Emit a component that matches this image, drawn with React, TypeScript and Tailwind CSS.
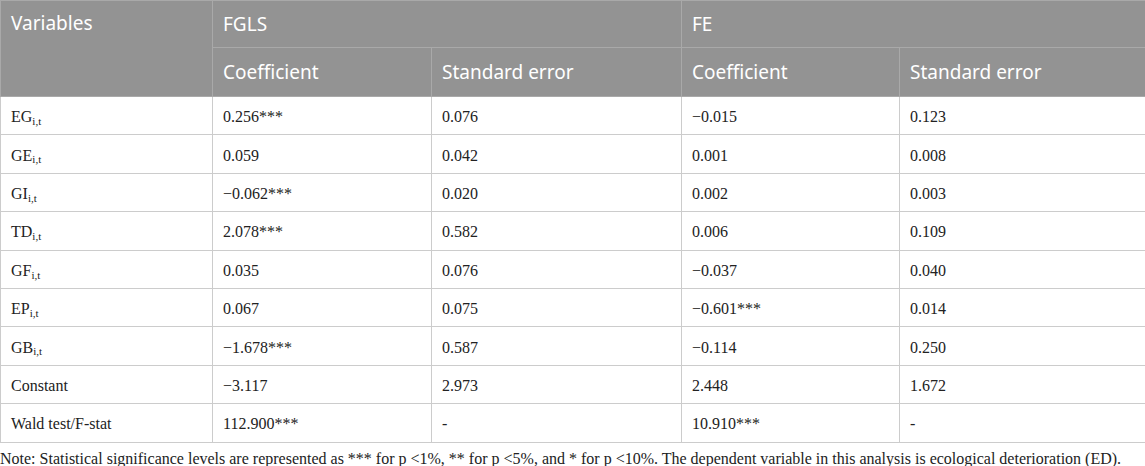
const rows: { name: string; sub?: string; v: string[] }[] = [
  { name: "EG", sub: "i,t", v: ["0.256***", "0.076", "\u22120.015", "0.123"] },
  { name: "GE", sub: "i,t", v: ["0.059", "0.042", "0.001", "0.008"] },
  { name: "GI", sub: "i,t", v: ["\u22120.062***", "0.020", "0.002", "0.003"] },
  { name: "TD", sub: "i,t", v: ["2.078***", "0.582", "0.006", "0.109"] },
  { name: "GF", sub: "i,t", v: ["0.035", "0.076", "\u22120.037", "0.040"] },
  { name: "EP", sub: "i,t", v: ["0.067", "0.075", "\u22120.601***", "0.014"] },
  { name: "GB", sub: "i,t", v: ["\u22121.678***", "0.587", "\u22120.114", "0.250"] },
  { name: "Constant", v: ["\u22123.117", "2.973", "2.448", "1.672"] },
  { name: "Wald test/F-stat", v: ["112.900***", "-", "10.910***", "-"] },
];

const sans = "font-['Noto_Sans',sans-serif]";
const serif = "font-['Liberation_Serif',serif]";

export default function App() {
  return (
    <div className="w-[1145px] h-[466px] bg-white overflow-hidden">
      <table className="w-[1145px] table-fixed border-collapse">
        <colgroup>
          <col className="w-[212px]" />
          <col className="w-[219px]" />
          <col className="w-[250px]" />
          <col className="w-[218px]" />
          <col className="w-[246px]" />
        </colgroup>
        <thead className={`${sans} text-white text-[19px] bg-[#939393]`}>
          <tr className="h-[47px]">
            <th rowSpan={2} className="border border-[#a9a9a9] px-[10px] pt-[8px] align-top text-left font-normal">
              Variables
            </th>
            <th colSpan={2} className="border border-[#a9a9a9] px-[10px] text-left font-normal">FGLS</th>
            <th colSpan={2} className="border border-[#a9a9a9] px-[10px] text-left font-normal">FE</th>
          </tr>
          <tr className="h-[49px]">
            <th className="border border-[#a9a9a9] px-[10px] text-left font-normal">Coefficient</th>
            <th className="border border-[#a9a9a9] px-[10px] text-left font-normal">Standard error</th>
            <th className="border border-[#a9a9a9] px-[10px] text-left font-normal">Coefficient</th>
            <th className="border border-[#a9a9a9] px-[10px] text-left font-normal">Standard error</th>
          </tr>
        </thead>
        <tbody className={`${serif} text-[16px] text-[#222]`}>
          {rows.map((r) => (
            <tr key={r.name} className="h-[38.4px]">
              <td className="border border-[#cccccc] px-[10px] pt-[3px]">
                {r.name}
                {r.sub && <sub className="text-[11px]">{r.sub}</sub>}
              </td>
              {r.v.map((v, i) => (
                <td key={i} className="border border-[#cccccc] px-[10px] pt-[3px]">{v}</td>
              ))}
            </tr>
          ))}
        </tbody>
      </table>
      <p className={`${serif} text-[16px] text-[#222] mt-[4px] whitespace-nowrap`}>
        Note: Statistical significance levels are represented as *** for p &lt;1%, ** for p &lt;5%, and * for p &lt;10%. The dependent variable in this analysis is ecological deterioration (ED).
      </p>
    </div>
  );
}
